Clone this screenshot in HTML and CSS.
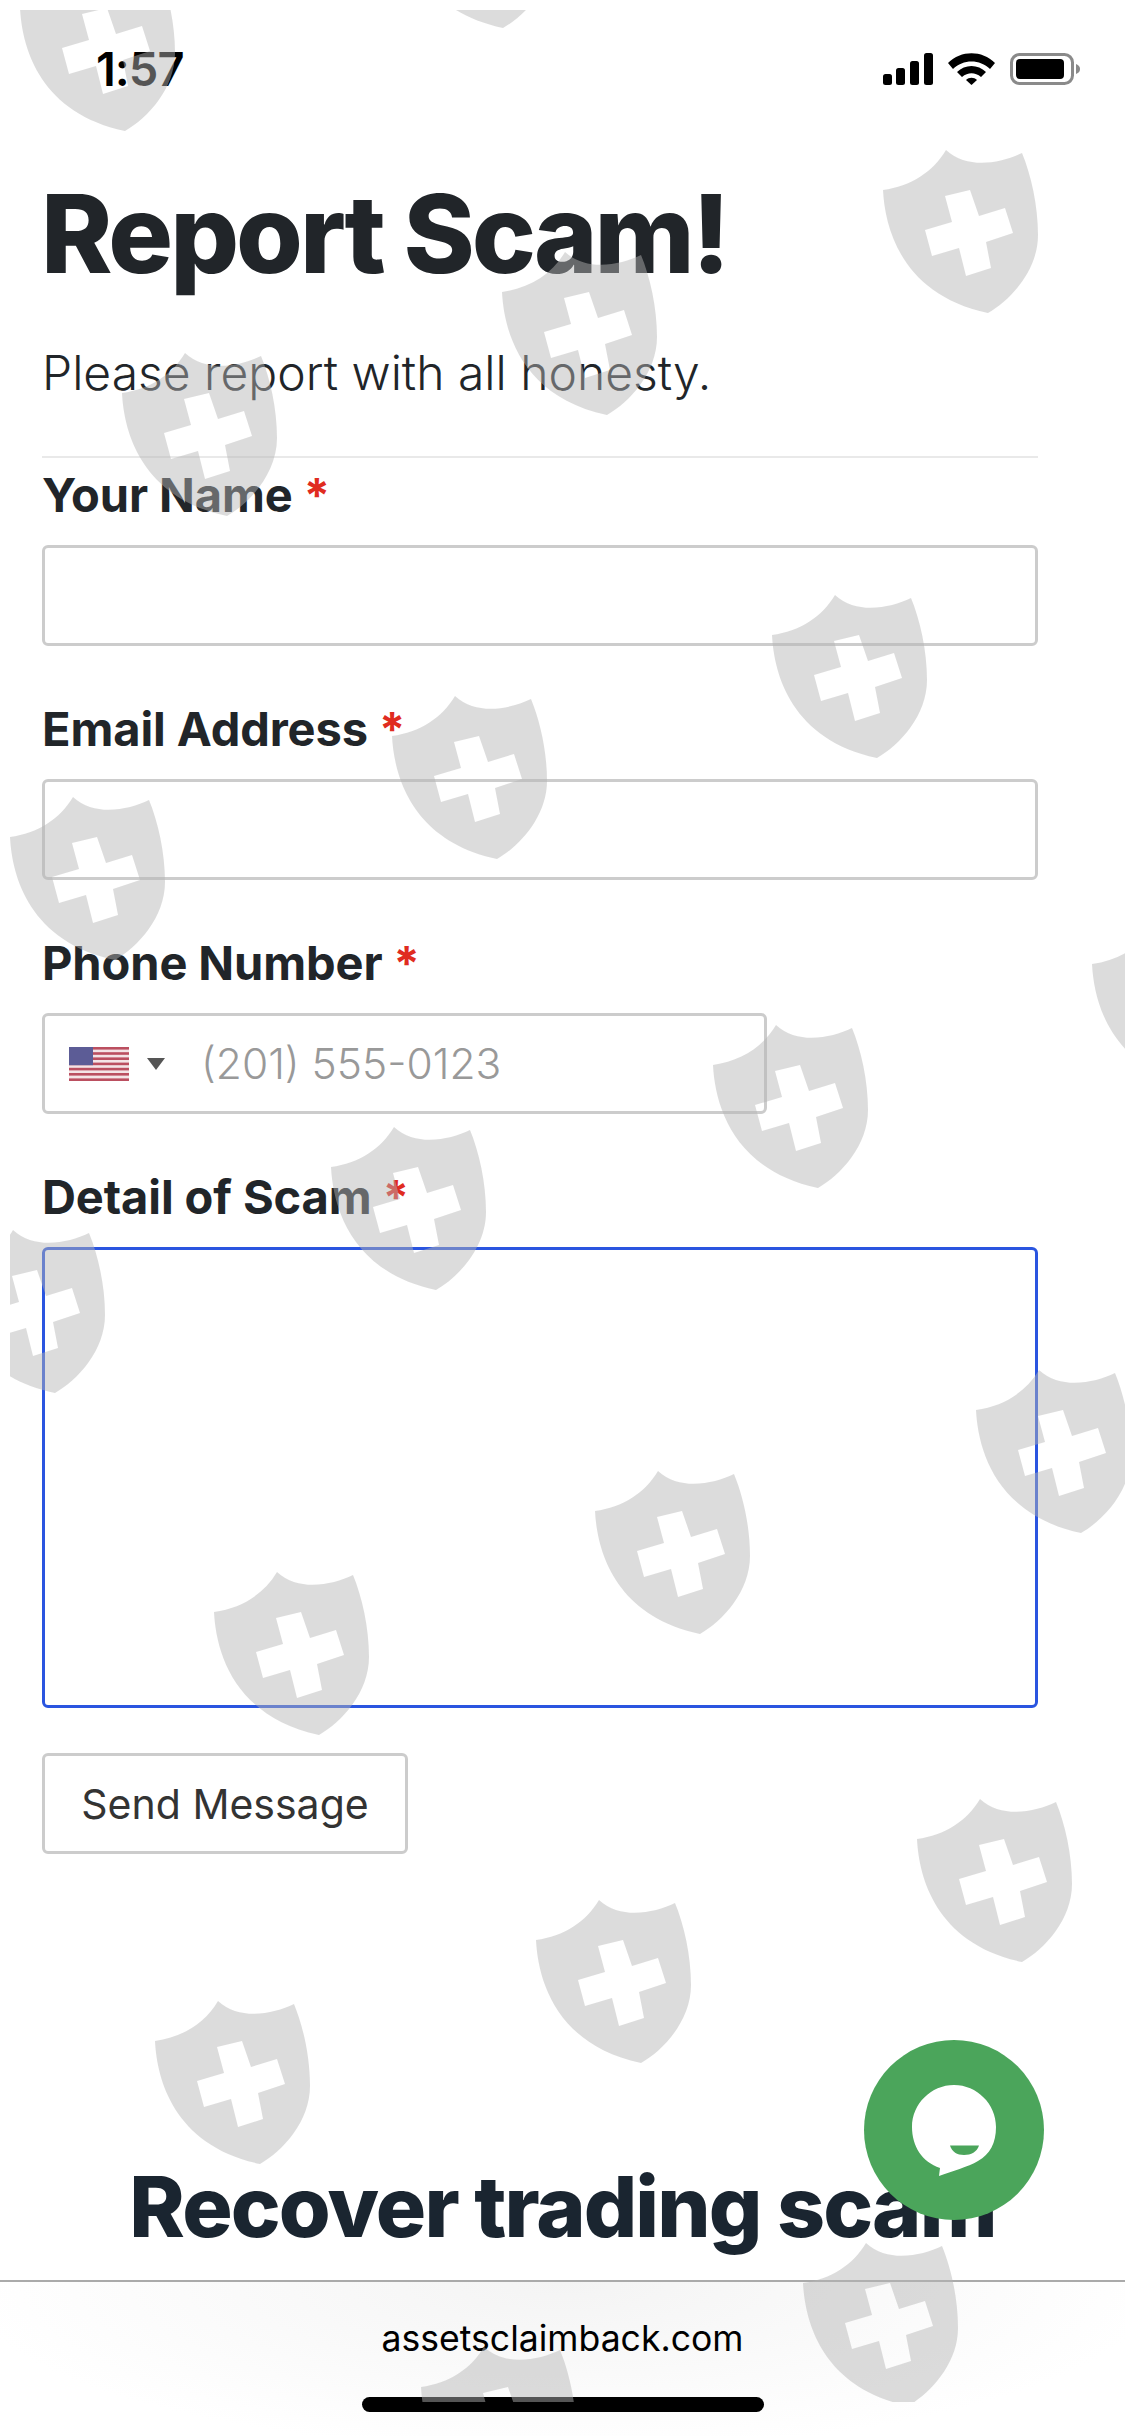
FILE: index.html
```html
<!DOCTYPE html>
<html lang="en">
<head>
    <meta charset="UTF-8">
    <meta name="viewport" content="width=device-width, initial-scale=1.0">
    <title>Report Scam</title>
    <link rel="stylesheet" href="styles.css">
</head>
<body>
    <div class="page">
        <div class="status-bar">
            <span class="time">1:57</span>
            <div class="status-icons">
                <svg width="50" height="32" viewBox="0 0 50 32">
                    <rect x="0" y="21" width="9" height="11" rx="2.5"/>
                    <rect x="13" y="15" width="9" height="17" rx="2.5"/>
                    <rect x="27" y="8" width="9" height="24" rx="2.5"/>
                    <rect x="41" y="0" width="9" height="32" rx="2.5"/>
                </svg>
                <svg width="47" height="32" viewBox="0 0 47 32">
                    <path d="M0 10 C13 -3 34 -3 47 10 L42 16 C32 6 15 6 5 16 Z"/>
                    <path d="M9 19 C17 11 30 11 38 19 L33 24 C27 19 20 19 14 24 Z"/>
                    <path d="M18 27 C21 24 26 24 29 27 L23.5 32 Z"/>
                </svg>
                <svg width="70" height="32" viewBox="0 0 70 32">
                    <rect x="1.5" y="1.5" width="61" height="29" rx="8" fill="none" stroke="#8a8a8a" stroke-width="3"/>
                    <rect x="6" y="6" width="48" height="20" rx="4"/>
                    <path d="M66 11 C69 12 70 14 70 16 C70 18 69 20 66 21 Z" fill="#8a8a8a"/>
                </svg>
            </div>
        </div>

        <main class="container">
            <h1>Report Scam!</h1>
            <p class="lead">Please report with all honesty.</p>
            <hr>
            <form>
                <div class="field">
                    <label>Your Name <span class="req">*</span></label>
                    <input type="text">
                </div>
                <div class="field">
                    <label>Email Address <span class="req">*</span></label>
                    <input type="text">
                </div>
                <div class="field">
                    <label>Phone Number <span class="req">*</span></label>
                    <div class="phone-input">
                        <svg class="flag" width="60" height="34" viewBox="0 0 60 34">
                            <rect width="60" height="34" fill="#f4e4e6"/>
                            <g fill="#bb4f60">
                                <rect y="0" width="60" height="2.6"/>
                                <rect y="5.2" width="60" height="2.6"/>
                                <rect y="10.4" width="60" height="2.6"/>
                                <rect y="15.6" width="60" height="2.6"/>
                                <rect y="20.8" width="60" height="2.6"/>
                                <rect y="26" width="60" height="2.6"/>
                                <rect y="31.4" width="60" height="2.6"/>
                            </g>
                            <rect width="24" height="18.2" fill="#5c5c96"/>
                        </svg>
                        <span class="caret"></span>
                        <input type="tel" placeholder="(201) 555-0123">
                    </div>
                </div>
                <div class="field">
                    <label>Detail of Scam <span class="req">*</span></label>
                    <textarea></textarea>
                </div>
                <button type="button" class="send-button">Send Message</button>
            </form>
        </main>

        <h2 class="recover">Recover trading scam</h2>

        <div class="url-bar">
            <span class="domain">assetsclaimback.com</span>
            <div class="home-indicator"></div>
        </div>

        <div class="chat-button">
            <svg width="180" height="180" viewBox="0 0 180 180">
                <path fill="#fff" d="M48 87 C48 64 67 45 90 45 C113 45 132 64 132 87 C132 103 126 114 114 121 C104 127 88 131 75 136 L76 128 C58 122 48 106 48 87 Z"/>
                <path fill="#4ba55b" d="M86 105.5 L115 105.5 C113 112 107 115 100 115 C93 115 88 112 86 105.5 Z"/>
            </svg>
        </div>

        <!-- watermark sits over the whole page -->
        <svg class="watermark" width="1125" height="2436" viewBox="0 0 1125 2436">
            <defs>
                <path id="shield" fill-rule="evenodd" d="M63 0 C50 22 28 36 0 40 C2 80 20 145 105 163 C128 150 155 120 155 85 C155 55 148 25 139 3 C118 13 85 20 63 0 Z M62 46 L87 40 L96 66 L122 58 L130 83 L103 92 L108 118 L83 126 L76 98 L49 106 L42 80 L69 72 Z"/>
            </defs>
            <use href="#shield" x="398" y="-135"/>
            <use href="#shield" x="20" y="-32"/>
            <use href="#shield" x="883" y="150"/>
            <use href="#shield" x="502" y="252"/>
            <use href="#shield" x="122" y="353"/>
            <use href="#shield" x="772" y="595"/>
            <use href="#shield" x="392" y="696"/>
            <use href="#shield" x="10" y="797"/>
            <use href="#shield" x="1092" y="924"/>
            <use href="#shield" x="713" y="1025"/>
            <use href="#shield" x="331" y="1127"/>
            <use href="#shield" x="-50" y="1230"/>
            <use href="#shield" x="976" y="1370"/>
            <use href="#shield" x="595" y="1471"/>
            <use href="#shield" x="214" y="1572"/>
            <use href="#shield" x="917" y="1799"/>
            <use href="#shield" x="536" y="1900"/>
            <use href="#shield" x="155" y="2001"/>
            <use href="#shield" x="803" y="2243"/>
            <use href="#shield" x="421" y="2347"/>
        </svg>
    </div>
</body>
</html>
```

FILE: styles.css
```css
body {
    font-family: Inter, "Liberation Sans", sans-serif;
    margin: 0;
    padding: 0;
    background-color: #fff;
    color: #212529;
}
.page {
    position: relative;
    width: 1125px;
    height: 2436px;
    overflow: hidden;
    display: flex;
    flex-direction: column;
}
.status-bar {
    height: 136px;
    padding: 45px 45px 0 96px;
    box-sizing: border-box;
    display: flex;
    justify-content: space-between;
    align-items: flex-start;
    color: #000;
}
.time {
    font-size: 47px;
    font-weight: 600;
    line-height: 48px;
    letter-spacing: -1px;
}
.status-icons {
    display: flex;
    gap: 15px;
    padding-top: 8px;
}
.status-icons svg {
    display: block;
}
.container {
    padding: 0 87px 0 42px;
}
h1 {
    margin: 33px 0 0 -1px;
    font-size: 108px;
    font-weight: 800;
    line-height: 130px;
    letter-spacing: -3px;
}
.lead {
    margin: 45px 0 0;
    font-size: 48px;
    font-weight: 300;
    line-height: 58px;
}
hr {
    margin: 54px 0 0;
    border: none;
    border-top: 2px solid #e9e9e9;
}
.field {
    margin-bottom: 45px;
}
label {
    display: block;
    font-size: 47px;
    font-weight: 700;
    line-height: 54px;
    letter-spacing: -0.1px;
    padding-top: 10px;
    margin-bottom: 23px;
}
.field:not(:first-child) label {
    padding-top: 11px;
}
.req {
    color: #e02b20;
}
input {
    font-family: inherit;
    outline: none;
    background: transparent;
}
.field > input {
    display: block;
    width: 100%;
    height: 101px;
    box-sizing: border-box;
    border: 3px solid #ccc;
    border-radius: 6px;
}
.phone-input {
    display: flex;
    align-items: center;
    width: 725px;
    height: 101px;
    box-sizing: border-box;
    border: 3px solid #ccc;
    border-radius: 6px;
    padding-left: 24px;
}
.caret {
    width: 0;
    height: 0;
    margin-left: 18px;
    border-left: 9px solid transparent;
    border-right: 9px solid transparent;
    border-top: 12px solid #555;
}
.phone-input input {
    border: none;
    padding: 0;
    margin-left: 36px;
    flex: 1;
    font-size: 42.5px;
    font-weight: 300;
    min-width: 0;
}
.phone-input input::placeholder {
    color: #999;
    opacity: 1;
}
textarea {
    display: block;
    width: 100%;
    height: 461px;
    box-sizing: border-box;
    border: 3px solid #2a55e0;
    border-radius: 6px;
    outline: none;
    background: transparent;
    resize: none;
}
.send-button {
    display: block;
    width: 366px;
    height: 101px;
    margin-top: 3px;
    background-color: transparent;
    border: 3px solid #ccc;
    border-radius: 6px;
    color: #333;
    font-family: inherit;
    font-size: 41px;
    font-weight: 400;
    padding: 0;
}
.recover {
    position: absolute;
    left: 0;
    right: 0;
    top: 2157px;
    margin: 0;
    text-align: center;
    font-size: 84px;
    font-weight: 800;
    line-height: 100px;
    letter-spacing: -1.9px;
    color: #1a2530;
}
.url-bar {
    position: absolute;
    left: 0;
    right: 0;
    bottom: 0;
    height: 156px;
    box-sizing: border-box;
    border-top: 2px solid #aaa;
    background: radial-gradient(ellipse 600px 170px at 50% 0, #f4f4f4, #fff);
    display: flex;
    flex-direction: column;
    align-items: center;
}
.domain {
    margin-top: 35px;
    font-size: 35.6px;
    line-height: 44px;
    color: #000;
}
.home-indicator {
    margin-top: 36px;
    width: 402px;
    height: 15px;
    border-radius: 8px;
    background-color: #000;
}
.chat-button {
    position: absolute;
    left: 864px;
    top: 2040px;
    width: 180px;
    height: 180px;
    border-radius: 50%;
    background-color: #4ba55b;
}
.chat-button svg {
    display: block;
}
.watermark {
    position: absolute;
    left: 0;
    top: 0;
    pointer-events: none;
    fill: rgba(181, 181, 181, 0.47);
    clip-path: inset(10px 0 34px 10px);
}
```
